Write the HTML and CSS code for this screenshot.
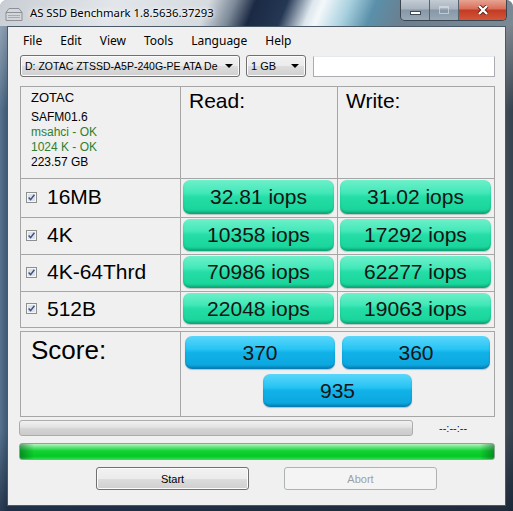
FILE: index.html
```html
<!DOCTYPE html>
<html>

<head>
  <meta charset="utf8">
  <title>AS SSD Benchmark</title>
  <link rel="stylesheet" href="styles.css">
</head>

<body>
  <div class="ventana">
    <div class="barra-titulo">
      <svg class="icono" width="18" height="15" viewBox="0 0 18 15">
        <path d="M4 1.5 H14 L17 5.5 V13.5 H1 V5.5 Z" fill="#d3d6da" stroke="#8d9197" />
        <path d="M1 5.5 H17" stroke="#8d9197" />
        <path d="M3 8.5 H15 M3 10.5 H15" stroke="#a7abb1" />
      </svg>
      <span class="titulo">AS SSD Benchmark 1.8.5636.37293</span>
      <div class="botones-ventana">
        <div class="btn-ventana minimizar"><span></span></div>
        <div class="btn-ventana maximizar"><span></span></div>
        <div class="btn-ventana cerrar">
          <svg width="12" height="10" viewBox="0 0 12 10">
            <path d="M2 1 L10 9 M10 1 L2 9" stroke="#5a1a10" stroke-width="4" />
            <path d="M2 1 L10 9 M10 1 L2 9" stroke="#fff" stroke-width="2.4" />
          </svg>
        </div>
      </div>
    </div>

    <div class="cliente">
      <ul class="menu">
        <li>File</li>
        <li>Edit</li>
        <li>View</li>
        <li>Tools</li>
        <li>Language</li>
        <li>Help</li>
      </ul>

      <div class="barra-herramientas">
        <div class="combo combo-unidad"><span>D: ZOTAC ZTSSD-A5P-240G-PE ATA De</span><i class="flecha"></i></div>
        <div class="combo combo-tamano"><span>1 GB</span><i class="flecha"></i></div>
        <input type="text" class="campo">
      </div>

      <div class="tabla resultados">
        <div class="celda info">
          <div class="marca">ZOTAC</div>
          <div class="detalle">SAFM01.6</div>
          <div class="detalle ok">msahci - OK</div>
          <div class="detalle ok">1024 K - OK</div>
          <div class="detalle">223.57 GB</div>
        </div>
        <div class="celda encabezado">Read:</div>
        <div class="celda encabezado">Write:</div>

        <div class="celda prueba">
          <svg width="11" height="11" viewBox="0 0 11 11"><rect x="0.5" y="0.5" width="10" height="10" fill="#f6f6f6" stroke="#8e8f8f" /><rect x="2" y="2" width="7" height="7" fill="#dce2ea" /><path d="M2.6 5.4 L4.6 7.6 L8.4 2.8" fill="none" stroke="#3d5283" stroke-width="1.5" /></svg>
          16MB
        </div>
        <div class="celda celda-valor"><div class="valor verde">32.81 iops</div></div>
        <div class="celda celda-valor"><div class="valor verde">31.02 iops</div></div>

        <div class="celda prueba">
          <svg width="11" height="11" viewBox="0 0 11 11"><rect x="0.5" y="0.5" width="10" height="10" fill="#f6f6f6" stroke="#8e8f8f" /><rect x="2" y="2" width="7" height="7" fill="#dce2ea" /><path d="M2.6 5.4 L4.6 7.6 L8.4 2.8" fill="none" stroke="#3d5283" stroke-width="1.5" /></svg>
          4K
        </div>
        <div class="celda celda-valor"><div class="valor verde">10358 iops</div></div>
        <div class="celda celda-valor"><div class="valor verde">17292 iops</div></div>

        <div class="celda prueba">
          <svg width="11" height="11" viewBox="0 0 11 11"><rect x="0.5" y="0.5" width="10" height="10" fill="#f6f6f6" stroke="#8e8f8f" /><rect x="2" y="2" width="7" height="7" fill="#dce2ea" /><path d="M2.6 5.4 L4.6 7.6 L8.4 2.8" fill="none" stroke="#3d5283" stroke-width="1.5" /></svg>
          4K-64Thrd
        </div>
        <div class="celda celda-valor"><div class="valor verde">70986 iops</div></div>
        <div class="celda celda-valor"><div class="valor verde">62277 iops</div></div>

        <div class="celda prueba">
          <svg width="11" height="11" viewBox="0 0 11 11"><rect x="0.5" y="0.5" width="10" height="10" fill="#f6f6f6" stroke="#8e8f8f" /><rect x="2" y="2" width="7" height="7" fill="#dce2ea" /><path d="M2.6 5.4 L4.6 7.6 L8.4 2.8" fill="none" stroke="#3d5283" stroke-width="1.5" /></svg>
          512B
        </div>
        <div class="celda celda-valor"><div class="valor verde">22048 iops</div></div>
        <div class="celda celda-valor"><div class="valor verde">19063 iops</div></div>
      </div>

      <div class="tabla puntuacion">
        <div class="celda etiqueta-score">Score:</div>
        <div class="celda puntos">
          <div class="valor azul">370</div>
          <div class="valor azul">360</div>
          <div class="valor azul total">935</div>
        </div>
      </div>

      <div class="fila-progreso">
        <div class="progreso vacio"></div>
        <span class="tiempo">--:--:--</span>
      </div>
      <div class="progreso lleno"></div>

      <div class="acciones">
        <button class="boton">Start</button>
        <button class="boton desactivado" disabled>Abort</button>
      </div>
    </div>
  </div>
</body>

</html>
```

FILE: styles.css
```css
/* Estilos generales */
body {
  margin: 0;
  background: #fff;
  font-family: "Liberation Sans", Arial, sans-serif;
}

/* Marco de la ventana */
.ventana {
  width: 513px;
  height: 511px;
  box-sizing: border-box;
  padding: 0 7px 5px 7px;
  border-radius: 7px 7px 0 0;
  display: flex;
  flex-direction: column;
  background:
    linear-gradient(to bottom, rgba(255, 255, 255, 0.45) 0, rgba(255, 255, 255, 0) 110px, rgba(0, 0, 0, 0) 430px, rgba(5, 15, 35, 0.55) 100%),
    linear-gradient(to right, #56728e 0, #3d5570 8px, #3f4c58 505px, #36424e 100%);
}

/* Barra de título */
.barra-titulo {
  height: 26px;
  margin: 0 -7px;
  padding: 0 6px 0 5px;
  display: flex;
  align-items: flex-start;
  border-radius: 7px 7px 0 0;
  background: linear-gradient(112deg, #c9ced4 0%, #e2e6ea 22%, #d6dbe0 40%, #7d8a99 45%, #1b2944 49%, #243754 55%, #dde7ee 60%, #f4f8fa 62%, #a9d1df 67%, #5a90ab 72%, #6b7f8f 78%, #7b8995 100%);
}

.icono {
  margin-top: 7px;
}

.titulo {
  margin-left: 7px;
  font-family: "Noto Sans", sans-serif;
  font-size: 11.3px;
  line-height: 26px;
  color: #000;
  text-shadow: 0 0 6px #fff, 0 0 3px #fff;
  flex: 1;
}

/* Botones de minimizar, maximizar y cerrar */
.botones-ventana {
  display: flex;
  height: 20px;
  border: 1px solid #3a4550;
  border-top: none;
  border-radius: 0 0 5px 5px;
  overflow: hidden;
}

.btn-ventana {
  width: 28px;
  display: flex;
  align-items: center;
  justify-content: center;
  border-right: 1px solid #56626e;
  background: linear-gradient(to bottom, #c3cbd3 0, #a9b4bf 45%, #8797a7 50%, #98a8b6 100%);
}

.minimizar span {
  width: 9px;
  height: 2px;
  margin-top: 5px;
  background: #fff;
  border: 1px solid #3e4a56;
}

.maximizar span {
  width: 8px;
  height: 5px;
  border: 1px solid #dfe6ec;
  border-top-width: 2px;
  opacity: 0.6;
}

.cerrar {
  width: 47px;
  border-right: none;
  background: linear-gradient(to bottom, #e7a392 0, #d86e58 45%, #c23b22 50%, #d4553a 100%);
}

/* Área cliente */
.cliente {
  flex: 1;
  background: #f0f0f0;
  border: 1px solid #4b5866;
  display: flex;
  flex-direction: column;
}

/* Menú */
.menu {
  list-style: none;
  margin: 0;
  padding: 3px 0 0 15px;
  height: 25px;
  box-sizing: border-box;
  display: flex;
  gap: 18px;
  font-family: "Noto Sans", sans-serif;
  font-size: 12px;
  line-height: 22px;
  color: #000;
}

/* Barra con las listas desplegables */
.barra-herramientas {
  margin-top: 3px;
  padding-left: 12px;
  height: 22px;
  display: flex;
  align-items: flex-start;
}

.combo {
  height: 22px;
  box-sizing: border-box;
  border: 1px solid #707070;
  border-radius: 3px;
  background: linear-gradient(to bottom, #f2f2f2 0, #ebebeb 50%, #dddddd 51%, #cfcfcf 100%);
  box-shadow: inset 0 0 0 1px #fcfcfc;
  display: flex;
  align-items: center;
  font-size: 11px;
  color: #000;
}

.combo span {
  flex: 1;
  white-space: nowrap;
  padding-left: 4px;
}

.combo-unidad {
  width: 220px;
  font-size: 10.5px;
}

.combo-tamano {
  width: 60px;
  margin-left: 6px;
}

.flecha {
  width: 0;
  height: 0;
  border-left: 4px solid transparent;
  border-right: 4px solid transparent;
  border-top: 4px solid #000;
  margin-right: 6px;
}

.campo {
  width: 182px;
  height: 21px;
  margin: 1px 0 0 7px;
  box-sizing: border-box;
  border: 1px solid #abadb3;
  border-top-color: #e3e9ef;
  background: #fff;
  padding: 0;
}

/* Tablas de resultados */
.tabla {
  display: grid;
  gap: 1px;
  width: 475px;
  box-sizing: border-box;
  margin-left: 12px;
  border: 1px solid #a6a6a6;
  background: #a6a6a6;
}

.resultados {
  margin-top: 9px;
  grid-template-columns: 159px 156px 156px;
  grid-template-rows: 91px 38px 36px 36px 35px;
}

.puntuacion {
  margin-top: 3px;
  grid-template-columns: 159px 313px;
  grid-template-rows: 84px;
}

.celda {
  background: #f0f0f0;
  color: #000;
}

/* Datos de la unidad */
.info {
  padding: 3px 0 0 10px;
  font-size: 12px;
  line-height: 15px;
}

.marca {
  font-size: 13px;
  margin-bottom: 5px;
}

.ok {
  color: #2f7f2f;
}

.encabezado {
  padding: 2px 0 0 8px;
  font-size: 21px;
  line-height: 24px;
}

.prueba {
  display: flex;
  align-items: center;
  gap: 10px;
  padding: 0 0 2px 5px;
  font-size: 21px;
}

.celda-valor {
  padding: 1px 3px 3px 2px;
}

/* Botones con los valores */
.valor {
  height: 100%;
  display: flex;
  align-items: center;
  justify-content: center;
  border-radius: 7px;
  font-size: 21px;
  color: #141414;
}

.verde {
  background: linear-gradient(to bottom, #6ef0ca 0%, #42e8b8 38%, #25dda6 50%, #1ad69c 86%, #12ba88 100%);
  box-shadow: inset 0 -2px 2px rgba(0, 90, 60, 0.25), 0 1px 1px rgba(0, 60, 40, 0.25);
}

.azul {
  background: linear-gradient(to bottom, #5ad6fa 0%, #27c4f4 40%, #11b2e8 50%, #0ca8e0 86%, #0a8fc6 100%);
  box-shadow: inset 0 -2px 2px rgba(0, 60, 110, 0.25), 0 1px 1px rgba(0, 40, 80, 0.25);
}

.etiqueta-score {
  padding: 3px 0 0 10px;
  font-size: 26px;
  line-height: 30px;
}

.puntos {
  display: grid;
  grid-template-columns: 150px 148px;
  grid-template-rows: 33px 33px;
  column-gap: 7px;
  row-gap: 5px;
  padding: 4px 0 0 4px;
  align-content: start;
}

.total {
  grid-column: 1 / -1;
  justify-self: center;
  width: 149px;
}

/* Barras de progreso */
.fila-progreso {
  margin-top: 3px;
  margin-left: 11px;
  display: flex;
  align-items: center;
}

.progreso {
  height: 16px;
  box-sizing: border-box;
  border-radius: 3px;
}

.vacio {
  width: 394px;
  border: 1px solid #acacac;
  background: linear-gradient(to bottom, #f1f1f1 0, #e2e2e2 45%, #d4d4d4 55%, #cbcbcb 100%);
}

.tiempo {
  margin-left: 26px;
  font-size: 11px;
  color: #222;
}

.lleno {
  width: 476px;
  height: 17px;
  margin: 7px 0 0 11px;
  border: 1px solid #8fa593;
  background:
    linear-gradient(to right, rgba(0, 70, 20, 0.45) 0, rgba(0, 70, 20, 0) 14px, rgba(0, 70, 20, 0) calc(100% - 14px), rgba(0, 70, 20, 0.45) 100%),
    linear-gradient(to bottom, #b8f4c1 0, #61e47b 22%, #10d232 46%, #05c827 82%, #2fd94b 100%);
}

/* Botones de Start y Abort */
.acciones {
  margin-top: 7px;
  padding-left: 88px;
  display: flex;
  gap: 35px;
}

.boton {
  width: 153px;
  height: 23px;
  border: 1px solid #707070;
  border-radius: 3px;
  background: linear-gradient(to bottom, #f2f2f2 0, #ebebeb 50%, #dddddd 51%, #cfcfcf 100%);
  box-shadow: inset 0 0 0 1px #fcfcfc;
  font-family: "Liberation Sans", Arial, sans-serif;
  font-size: 11px;
  color: #000;
  padding: 0;
}

.desactivado {
  border-color: #adb2b5;
  background: #f4f4f4;
  box-shadow: none;
  color: #a0a0a0;
}
```
